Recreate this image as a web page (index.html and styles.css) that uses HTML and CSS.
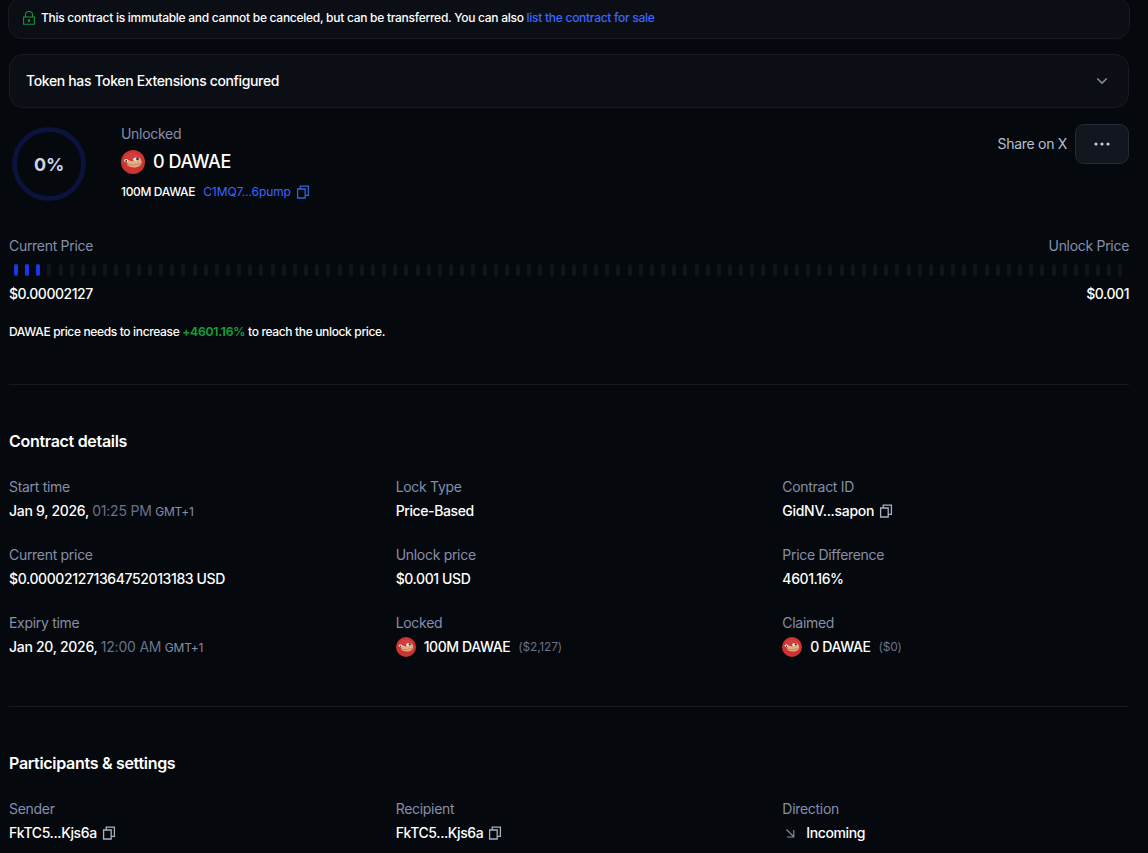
FILE: index.html
```html
<!DOCTYPE html>
<html lang="en">
<head>
    <meta charset="UTF-8">
    <meta name="viewport" content="width=device-width, initial-scale=1.0">
    <title>DAWAE Contract</title>
    <link rel="stylesheet" href="styles.css">
</head>
<body>
    <!-- Shared icons -->
    <svg class="sprite" width="0" height="0">
        <symbol id="icon-copy" viewBox="0 0 14 14">
            <path d="M1.6 4h7.6v9H1.6z M4.2 3.9V1.1h8.2v9.3H9.4" fill="none" stroke="currentColor" stroke-width="1.3"/>
        </symbol>
        <symbol id="token-logo" viewBox="0 0 24 24">
            <circle cx="12" cy="12" r="12" fill="#cb3433"/>
            <path d="M3 8Q7 2 13 3q6 1 8 5l-8 2z" fill="#d43e3c"/>
            <path d="M3 10q2-1.600 4.500 0 2.500 1.400 5 .8 1-2.600 4.200-3 3.200-.2 3.300 2 1 1.800.6 3.600-1.600 3.400-6.600 4-5 .4-8.200-2.400L7 13Q3.600 12.500 3 10z" fill="#e6ac84"/>
            <path d="M6.500 14.800q6.500 1.300 13.500-1.300" fill="none" stroke="#bd7353" stroke-width=".8"/>
            <ellipse cx="5.2" cy="10.6" rx="2" ry="1.6" fill="#f3efec"/>
            <ellipse cx="14.6" cy="9.2" rx="2.4" ry="1.6" fill="#f3efec"/>
            <circle cx="5.2" cy="11" r=".9" fill="#30242a"/>
            <circle cx="16.4" cy="9" r="1.2" fill="#30242a"/>
        </symbol>
    </svg>

    <div class="page">
        <div class="notice">
            <svg class="lock" viewBox="0 0 12 14" fill="none" stroke="currentColor" stroke-width="1.1">
                <path d="M.6 6h10.8v7.2H.6zM2.5 6V3.8a3.5 3.3 0 0 1 7 0V6"/>
                <path d="M5.5 8.9h1v1.3h-1z"/>
            </svg>
            <p>This contract is immutable and cannot be canceled, but can be transferred. You can also <a href="#">list the contract for sale</a></p>
        </div>

        <div class="extensions">
            <span>Token has Token Extensions configured</span>
            <svg class="chevron" viewBox="0 0 12 8"><path d="M1.3 1.5L6 6.1l4.7-4.6" fill="none" stroke="currentColor" stroke-width="1.6"/></svg>
        </div>

        <section class="summary">
            <div class="ring">0%</div>
            <div class="summary-info">
                <div class="label">Unlocked</div>
                <div class="amount"><svg class="token"><use href="#token-logo"/></svg>0 DAWAE</div>
                <div class="total">
                    <span>100M DAWAE</span>
                    <a href="#">C1MQ7...6pump</a>
                    <svg class="copy"><use href="#icon-copy"/></svg>
                </div>
            </div>
            <div class="actions">
                <span class="share">Share on X</span>
                <button class="more"><svg viewBox="0 0 16 4"><circle cx="2" cy="2" r="1.6"/><circle cx="8" cy="2" r="1.6"/><circle cx="14" cy="2" r="1.6"/></svg></button>
            </div>
        </section>

        <section class="price">
            <div class="price-row label"><span>Current Price</span><span>Unlock Price</span></div>
            <div class="ticks"></div>
            <div class="price-row value"><span>$0.00002127</span><span>$0.001</span></div>
            <p class="price-note">DAWAE price needs to increase <b>+4601.16%</b> to reach the unlock price.</p>
        </section>

        <section class="details">
            <h2>Contract details</h2>
            <div class="grid">
                <div class="item">
                    <div class="label">Start time</div>
                    <div class="value date"><span>Jan 9, 2026, <span class="time">01:25 PM</span> <span class="zone">GMT+1</span></span></div>
                </div>
                <div class="item">
                    <div class="label">Lock Type</div>
                    <div class="value">Price-Based</div>
                </div>
                <div class="item">
                    <div class="label">Contract ID</div>
                    <div class="value date">GidNV...sapon <svg class="copy"><use href="#icon-copy"/></svg></div>
                </div>
                <div class="item">
                    <div class="label">Current price</div>
                    <div class="value">$0.000021271364752013183 USD</div>
                </div>
                <div class="item">
                    <div class="label">Unlock price</div>
                    <div class="value">$0.001 USD</div>
                </div>
                <div class="item">
                    <div class="label">Price Difference</div>
                    <div class="value">4601.16%</div>
                </div>
                <div class="item">
                    <div class="label">Expiry time</div>
                    <div class="value date"><span>Jan 20, 2026, <span class="time">12:00 AM</span> <span class="zone">GMT+1</span></span></div>
                </div>
                <div class="item">
                    <div class="label">Locked</div>
                    <div class="value"><svg class="token small"><use href="#token-logo"/></svg>100M DAWAE <span class="usd">($2,127)</span></div>
                </div>
                <div class="item">
                    <div class="label">Claimed</div>
                    <div class="value"><svg class="token small"><use href="#token-logo"/></svg>0 DAWAE <span class="usd">($0)</span></div>
                </div>
            </div>
        </section>

        <section class="details">
            <h2>Participants &amp; settings</h2>
            <div class="grid">
                <div class="item">
                    <div class="label">Sender</div>
                    <div class="value">FkTC5...Kjs6a <svg class="copy"><use href="#icon-copy"/></svg></div>
                </div>
                <div class="item">
                    <div class="label">Recipient</div>
                    <div class="value">FkTC5...Kjs6a <svg class="copy"><use href="#icon-copy"/></svg></div>
                </div>
                <div class="item">
                    <div class="label">Direction</div>
                    <div class="value"><svg class="arrow" viewBox="0 0 16 16"><path d="M4.5 4.5l7 7M11.8 5v7H5" fill="none" stroke="currentColor" stroke-width="1.2"/></svg>Incoming</div>
                </div>
            </div>
        </section>
    </div>

    <script>
        // Price progress: 100 ticks, the first ones are filled
        const ticks = document.querySelector('.ticks');
        for (let i = 0; i < 100; i++) {
            const tick = document.createElement('span');
            tick.className = i < 3 ? 'tick active' : 'tick';
            ticks.appendChild(tick);
        }
    </script>
</body>
</html>
```
FILE: styles.css
```css
* {
    box-sizing: border-box;
}
body {
    margin: 0;
    background-color: #05080c;
    color: #fff;
    font-family: Inter, sans-serif;
    font-size: 14px;
    line-height: 20px;
    letter-spacing: -0.3px;
}
p, h2 {
    margin: 0;
}
a {
    color: #3b66ff;
    text-decoration: none;
}
.sprite {
    display: block;
}
.page {
    width: 1120px;
    margin-left: 9px;
}
.notice {
    display: flex;
    align-items: center;
    gap: 6px;
    height: 42px;
    margin: -3px -1px 0;
    padding: 0 14px;
    border: 1px solid #181c22;
    border-radius: 14px;
    background: #0b0f15;
    font-size: 12px;
    font-weight: 500;
    letter-spacing: -0.275px;
}
.lock {
    width: 12px;
    height: 14px;
    color: #15973a;
}
.extensions {
    display: flex;
    align-items: center;
    justify-content: space-between;
    height: 54px;
    margin-top: 15px;
    padding: 0 20px 0 16px;
    border: 1px solid #181c22;
    border-radius: 14px;
    background: #0b0f15;
    font-weight: 500;
    letter-spacing: -0.36px;
}
.chevron {
    width: 12px;
    height: 8px;
    color: #858b9b;
}
.summary {
    display: flex;
    margin-top: 16px;
    height: 80px;
}
.ring {
    display: flex;
    align-items: center;
    justify-content: center;
    width: 74px;
    height: 74px;
    margin: 3px 35px 0 3px;
    padding-top: 2px;
    border: 5px solid #0b123b;
    border-radius: 50%;
    color: #cbd5ec;
    font-size: 18px;
    font-weight: 700;
}
.label {
    color: #858fab;
}
.amount {
    display: flex;
    align-items: center;
    gap: 8px;
    height: 28px;
    margin-top: 4px;
    font-size: 18px;
    font-weight: 500;
    letter-spacing: -0.45px;
}
.token {
    width: 24px;
    height: 24px;
}
.token.small {
    width: 20px;
    height: 20px;
    margin-right: 8px;
}
.total {
    display: flex;
    align-items: center;
    margin-top: 6px;
    font-size: 12px;
    font-weight: 500;
    letter-spacing: -0.35px;
}
.total a {
    margin-left: 8px;
    font-weight: 400;
    letter-spacing: -0.08px;
}
.copy {
    width: 14px;
    height: 14px;
    margin-left: 5px;
    color: #a9b0c0;
}
.total .copy {
    color: #3264d8;
}
.actions {
    display: flex;
    align-items: center;
    gap: 8px;
    height: 40px;
    margin-left: auto;
}
.share {
    color: #b6bfd2;
}
.more {
    display: flex;
    align-items: center;
    justify-content: center;
    width: 54px;
    height: 40px;
    padding: 0;
    border: 1px solid #242934;
    border-radius: 9px;
    background: #12161f;
}
.more svg {
    width: 16px;
    height: 4px;
    fill: #c8ccd5;
}
.price {
    height: 149px;
    margin-top: 32px;
    border-bottom: 1px solid #171b21;
}
.price-row {
    display: flex;
    justify-content: space-between;
}
.ticks {
    display: flex;
    justify-content: space-between;
    margin: 8px 0;
    padding: 0 6px 0 5px;
}
.tick {
    width: 4px;
    height: 12px;
    border-radius: 2px;
    background: #11151d;
}
.tick.active {
    background: #1d35e8;
}
.price-note {
    margin-top: 18px;
    font-size: 12px;
    font-weight: 500;
    letter-spacing: -0.35px;
}
.price-note b {
    color: #149936;
    font-weight: 700;
    letter-spacing: -0.27px;
}
.details {
    padding: 44px 0 49px;
    border-bottom: 1px solid #171b21;
}
.details:last-child {
    padding-bottom: 0;
    border-bottom: none;
}
.details h2 {
    font-size: 16px;
    line-height: 24px;
    font-weight: 600;
}
.grid {
    display: grid;
    grid-template-columns: repeat(3, 1fr);
    column-gap: 40px;
    row-gap: 24px;
    margin-top: 24px;
}
.value {
    font-weight: 500;
    letter-spacing: -0.39px;
}
.item .value {
    display: flex;
    align-items: center;
    height: 20px;
    margin-top: 4px;
}
.price .value {
    letter-spacing: -0.45px;
}
.value.date {
    letter-spacing: -0.29px;
}
.time {
    color: #69728a;
    font-weight: 400;
    letter-spacing: -0.2px;
}
.zone {
    color: #858fab;
    font-size: 12px;
    font-weight: 400;
    letter-spacing: -0.2px;
}
.usd {
    margin-left: 8px;
    color: #69728a;
    font-size: 12px;
    font-weight: 400;
    letter-spacing: -0.2px;
}
.arrow {
    width: 16px;
    height: 16px;
    margin-right: 8px;
    color: #858c9d;
}
```
